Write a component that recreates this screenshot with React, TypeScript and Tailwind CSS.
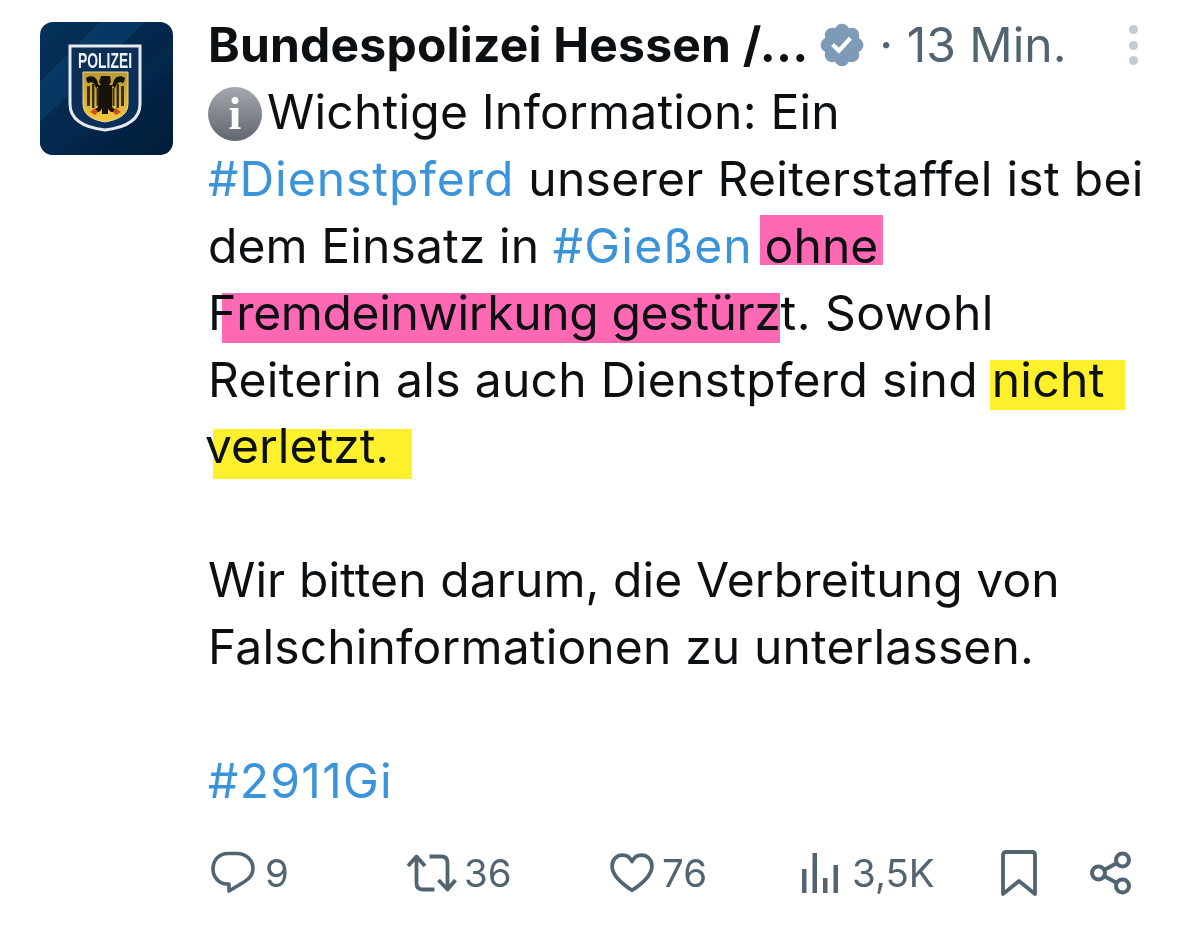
import React from 'react';

const font = { fontFamily: 'Inter, "Noto Sans", sans-serif' };

const PoliceBadge: React.FC = () => (
    <svg viewBox="0 0 133 133" className="h-[133px] w-[133px] shrink-0 rounded-[13px]">
        <defs>
            <linearGradient id="bg" x1="0" y1="0" x2="1" y2="1">
                <stop offset="0" stopColor="#05325a" />
                <stop offset="0.55" stopColor="#03264a" />
                <stop offset="1" stopColor="#021c38" />
            </linearGradient>
            <linearGradient id="gold" x1="0" y1="0" x2="0" y2="1">
                <stop offset="0" stopColor="#b99a35" />
                <stop offset="1" stopColor="#f2c93e" />
            </linearGradient>
        </defs>
        <rect width="133" height="133" fill="url(#bg)" />
        <path d="M0 60 L60 0 H105 L0 100 Z" fill="#0a4472" opacity="0.55" />
        <path d="M0 118 L133 20 V45 L20 133 H0 Z" fill="#04294f" opacity="0.7" />
        <path d="M30 24 H100 V82 C100 100 82 106 65 108 C48 106 30 100 30 82 Z" fill="#0b2f57" stroke="#e6e9ee" strokeWidth="3" />
        <text x="65" y="46" textAnchor="middle" fill="#eef1f5" fontFamily="Liberation Sans, sans-serif" fontWeight="700" fontSize="22" textLength="54" lengthAdjust="spacingAndGlyphs">POLIZEI</text>
        <path d="M43 50 H88 V82 C88 94 76 98 65 100 C54 98 43 94 43 82 Z" fill="url(#gold)" stroke="#e8d9a0" strokeWidth="1" />
        {/* eagle */}
        <path d="M61 54 h9 l1 6 l-2 3 l3 0 v22 l6 5 h-7 l-3 -3 v5 h-6 v-5 l-3 3 h-7 l6 -5 v-22 l3 0 l-2 -3 Z" fill="#17120a" />
        <path d="M46 56 c4 -3 9 -2 11 2 l2 6 l-3 2 c-1 -4 -3 -6 -6 -6 c-1 2 -3 2 -4 -4 Z M85 56 c-4 -3 -9 -2 -11 2 l-2 6 l3 2 c1 -4 3 -6 6 -6 c1 2 3 2 4 -4 Z" fill="#17120a" />
        <path d="M47 64 h3 v20 h-3 Z M52 62 h2.500 v24 h-2.500 Z M56.500 66 h2 v18 h-2 Z M81 64 h3 v20 h-3 Z M76.500 62 h2.500 v24 h-2.500 Z M72.500 66 h2 v18 h-2 Z" fill="#3a2e12" />
        <path d="M50 90 l5 -4 l3 4 l-3 3 Z M81 90 l-5 -4 l-3 4 l3 3 Z" fill="#d2501e" />
    </svg>
);

const VerifiedBadge: React.FC = () => (
    <svg viewBox="0 0 24 24" className="h-[50px] w-[50px]" fill="#7f9ab7">
        <path d="M22.25 12c0-1.43-.88-2.67-2.19-3.34.46-1.39.2-2.9-.81-3.91s-2.52-1.27-3.91-.81c-.66-1.31-1.91-2.19-3.34-2.19s-2.67.88-3.33 2.19c-1.4-.46-2.91-.2-3.92.81s-1.26 2.52-.8 3.91c-1.31.67-2.2 1.91-2.2 3.34s.89 2.67 2.2 3.34c-.46 1.39-.21 2.9.8 3.91s2.52 1.26 3.91.81c.67 1.31 1.91 2.19 3.34 2.19s2.68-.88 3.34-2.19c1.39.45 2.9.2 3.91-.81s1.27-2.52.81-3.91c1.31-.67 2.19-1.91 2.19-3.34zm-11.71 4.2L6.8 12.46l1.41-1.42 2.26 2.26 4.8-5.23 1.47 1.36-6.2 6.77z" />
    </svg>
);

const InfoIcon: React.FC = () => (
    <span className="mr-[5px] inline-flex h-[54px] w-[54px] items-center justify-center rounded-full bg-gradient-to-b from-[#a4a8af] to-[#62666e] align-[0px] text-[46px] font-bold leading-none text-white [font-family:'Liberation_Serif',serif]">
        i
    </span>
);

const Tag: React.FC<{ className?: string; children: React.ReactNode }> = ({ className, children }) => (
    <span className={`text-[#3b94d9] ${className ?? ''}`}>{children}</span>
);

const Mark: React.FC<{ className: string; children: React.ReactNode }> = ({ className, children }) => (
    <span className={`inline-block h-[50px] mix-blend-multiply ${className}`}>{children}</span>
);

const Line: React.FC<{ className?: string; children?: React.ReactNode }> = ({ className, children }) => (
    <div className={`h-[66.9px] ${className ?? ''}`}>{children}</div>
);

const Stat: React.FC<{ className: string; icon: React.ReactNode; label: string }> = ({ className, icon, label }) => (
    <div className={`flex items-center ${className}`}>
        {icon}
        <span className="text-[38.5px] leading-none text-[#536471]">{label}</span>
    </div>
);

export default function App() {
    return (
        <div className="h-[925px] w-[1200px] overflow-hidden bg-white text-[#0d1013]" style={font}>
            <div className="flex gap-[35px] pl-10 pt-[22px]">
                <PoliceBadge />

                <div className="w-[950px]">
                    {/* Header */}
                    <div className="flex h-[46px] items-center pr-[20px]">
                        <span className="whitespace-nowrap text-[48px] font-bold leading-none tracking-[0.2px]">Bundespolizei Hessen /...</span>
                        <span className="ml-[9px]"><VerifiedBadge /></span>
                        <span className="ml-[12px] whitespace-nowrap text-[48px] leading-none text-[#536471]">· 13 Min.</span>
                        <div className="ml-auto flex flex-col gap-[6.5px]">
                            <span className="h-[9px] w-[9px] rounded-full bg-[#c3ccd5]" />
                            <span className="h-[9px] w-[9px] rounded-full bg-[#c3ccd5]" />
                            <span className="h-[9px] w-[9px] rounded-full bg-[#c3ccd5]" />
                        </div>
                    </div>

                    {/* Body */}
                    <div className="mt-[11px] whitespace-nowrap text-[48px] leading-[66.9px]">
                        <Line className="tracking-[0.2px]"><InfoIcon />Wichtige Information: Ein</Line>
                        <Line className="tracking-[0.3px]"><Tag className="tracking-[1px]">#Dienstpferd</Tag> unserer Reiterstaffel ist bei</Line>
                        <Line className="tracking-[0.1px]">dem Einsatz in <Tag className="tracking-[1.2px]">#Gießen</Tag> <Mark className="-ml-[7px] bg-[#ff69b4] pl-[5px] pr-[5px] leading-[61px]">ohne</Mark></Line>
                        <Line className="tracking-[-0.05px]">F<Mark className="-ml-[14px] bg-[#ff69b4] pl-[14px] leading-[39px] tracking-[-0.35px]">remdeinwirkung gestürz</Mark><span className="tracking-[0.5px]">t. Sowohl</span></Line>
                        <Line className="tracking-[0.3px]">Reiterin als auch Dienstpferd sind <Mark className="-ml-[2px] bg-[#fff02e] pl-[2px] pr-[20px] leading-[39px]">nicht</Mark></Line>
                        <Line className="tracking-[0px]"><Mark className="ml-[5px] bg-[#fff02e] pr-[23px] leading-[33px]"><span className="-ml-[8px]">verletzt.</span></Mark></Line>
                        <Line />
                        <Line className="tracking-[0.1px]">Wir bitten darum, die Verbreitung von</Line>
                        <Line className="tracking-[0.15px]">Falschinformationen zu unterlassen.</Line>
                        <Line />
                        <Line><Tag className="tracking-[1.3px]">#2911Gi</Tag></Line>
                    </div>

                    {/* Actions */}
                    <div className="mt-[33px] flex h-[50px] items-center pl-[3px]">
                        <Stat
                            className="w-[195px] gap-[10px]"
                            label="9"
                            icon={
                                <svg viewBox="0 0 44 44" className="h-[44px] w-[44px]" fill="none" stroke="#536471" strokeWidth="3.6" strokeLinejoin="round">
                                    <path d="M17 2.500 H26 C35 2.500 42 9 42 17.500 C42 24 38 28 33 31 L18 40 V33 H16 C8 33 2 26 2 18 C2 9 8 2.500 17 2.500 Z" />
                                </svg>
                            }
                        />
                        <Stat
                            className="w-[204px] gap-[7px]"
                            label="36"
                            icon={
                                <svg viewBox="0 0 50 38" className="h-[38px] w-[51px]" fill="none" stroke="#536471" strokeWidth="3.8" strokeLinejoin="round">
                                    <path d="M1.500 12 L10 2.500 L18.500 12 M10 3 V29 C10 33 12 35.500 16 35.500 H28" />
                                    <path d="M23 2.500 H35 C39 2.500 41 5 41 9 V35 M32 26 L41 35.500 L49 26" />
                                </svg>
                            }
                        />
                        <Stat
                            className="w-[192px] gap-[8px]"
                            label="76"
                            icon={
                                <svg viewBox="0 0 42 38" className="h-[40px] w-[44px]" fill="none" stroke="#536471" strokeWidth="3.6" strokeLinejoin="round">
                                    <path d="M21 35.500 C11 29 2 21 2 12.500 C2 6 6.500 2 12 2 C16 2 19 4 21 8 C23 4 26 2 30 2 C35.500 2 40 6 40 12.500 C40 21 31 29 21 35.500 Z" />
                                </svg>
                            }
                        />
                        <Stat
                            className="w-[199px] gap-[14px]"
                            label="3,5K"
                            icon={
                                <svg viewBox="0 0 36 40" className="h-[40px] w-[36px]" fill="#536471">
                                    <rect x="0" y="16" width="4.500" height="24" />
                                    <rect x="10.500" y="0" width="4.500" height="40" />
                                    <rect x="21" y="25" width="4.500" height="15" />
                                    <rect x="31.500" y="12" width="4.500" height="28" />
                                </svg>
                            }
                        />
                        <svg viewBox="0 0 36 46" className="h-[46px] w-[36px]" fill="none" stroke="#536471" strokeWidth="3.800" strokeLinejoin="round">
                            <path d="M2 44 V5 C2 3 3 2 5 2 H31 C33 2 34 3 34 5 V44 L18 31 Z" />
                        </svg>
                        <svg viewBox="0 0 42 44" className="ml-[53px] h-[44px] w-[42px]" fill="none" stroke="#536471" strokeWidth="4">
                            <circle cx="8.500" cy="22" r="6.500" />
                            <circle cx="32.500" cy="9" r="6.500" />
                            <circle cx="32.500" cy="35" r="6.500" />
                            <path d="M14 19 L27 12 M14 25 L27 32" />
                        </svg>
                    </div>
                </div>
            </div>
        </div>
    );
}
